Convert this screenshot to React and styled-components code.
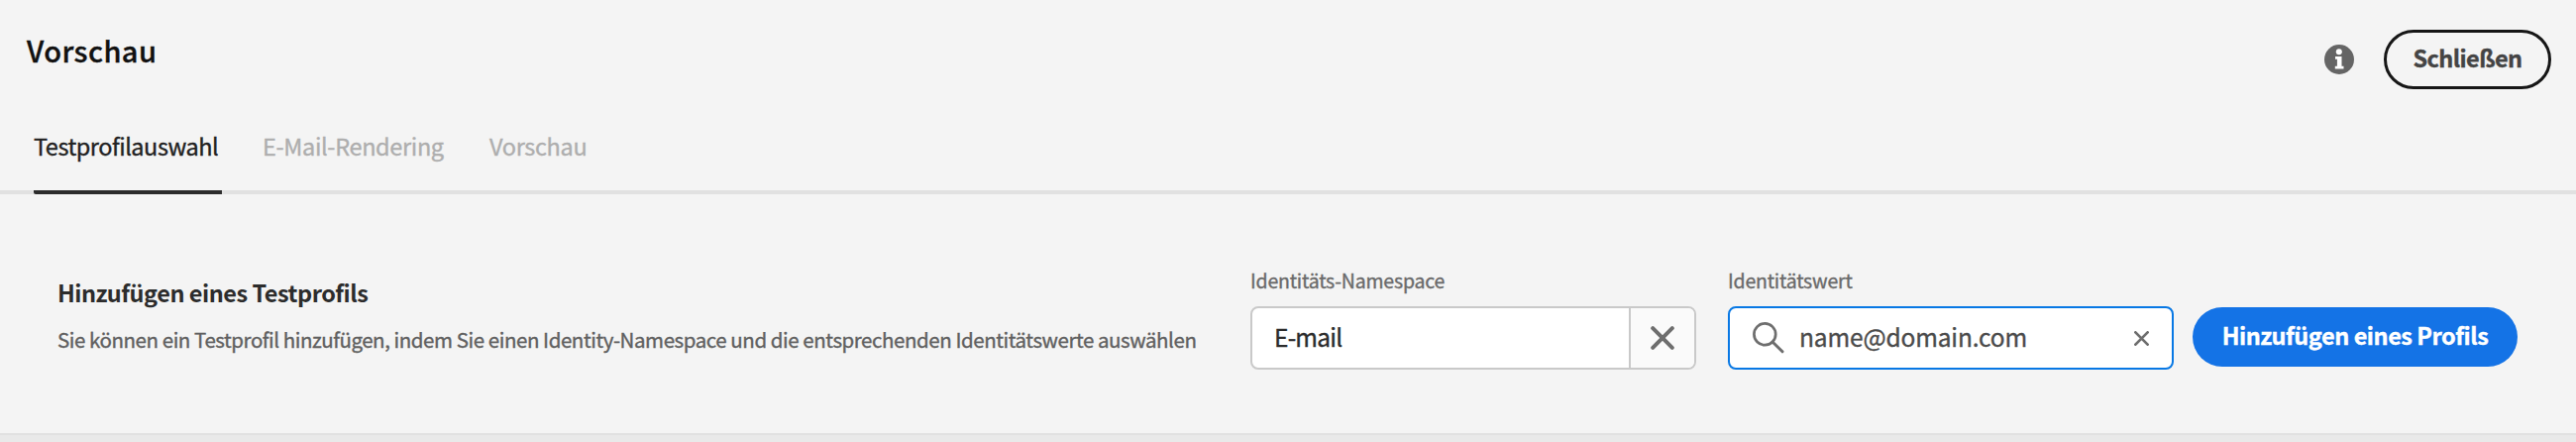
import React from 'react';
import styled, { createGlobalStyle } from 'styled-components';

const GlobalStyle = createGlobalStyle`
  * { box-sizing: border-box; }
  body {
    margin: 0;
    background: #f4f4f4;
    font-family: "Noto Sans CJK SC", "Noto Sans", sans-serif;
    line-height: 32px;
    color: #2c2c2c;
    -webkit-text-stroke: 0.35px currentColor;
  }
  button, input { font: inherit; color: inherit; }
`;

const Page = styled.main`
  height: 446px;
  display: flex;
  flex-direction: column;
  overflow: hidden;
`;

const Header = styled.header`
  height: 131px;
  padding: 30px 25px 0 27px;
  display: flex;
  align-items: flex-start;
  justify-content: space-between;
`;

const Title = styled.h1`
  margin: 4px 0 0;
  font-size: 29px;
  font-weight: 500;
  letter-spacing: 0.45px;
  color: #111;
  white-space: nowrap;
`;

const HeaderActions = styled.div`
  display: flex;
  align-items: center;
  gap: 30px;
`;

const Pill = styled.button`
  height: 60px;
  width: ${(p) => p.$width}px;
  padding: 0;
  border-radius: 30px;
  border: ${(p) => (p.$primary ? 'none' : '3px solid #161616')};
  background: ${(p) => (p.$primary ? '#1473e6' : 'transparent')};
  color: ${(p) => (p.$primary ? '#fff' : '#444')};
  font-size: 23.5px;
  font-weight: 700;
  letter-spacing: ${(p) => (p.$primary ? '-0.46px' : '-0.6px')};
  line-height: ${(p) => (p.$primary ? '57px' : '50px')};
  display: flex;
  justify-content: center;
  align-items: flex-start;
  white-space: nowrap;
`;

const Tabs = styled.nav`
  height: 65px;
  padding-left: 34px;
  display: flex;
  gap: 41px;
  box-shadow: inset 0 -4px #e1e1e1;
`;

const Tab = styled.a`
  width: ${(p) => p.$width}px;
  border-bottom: 4px solid ${(p) => (p.$active ? '#2c2c2c' : 'transparent')};
  border-bottom-left-radius: 2px;
  color: ${(p) => (p.$active ? '#222' : '#aeaeae')};
  font-size: 23.5px;
  letter-spacing: ${(p) => (p.$active ? -0.48 : -0.35)}px;
  white-space: nowrap;
`;

const Section = styled.section`
  height: 243px;
  padding: 70px 58px 0;
  display: flex;
  align-items: flex-start;
  border-bottom: 2px solid #e1e1e1;
`;

const Intro = styled.div`
  width: 1204px;
  padding-top: 13px;
`;

const Heading = styled.h2`
  margin: 0 0 15px;
  font-size: 23.5px;
  font-weight: 700;
  letter-spacing: -0.47px;
  color: #2c2c2c;
  -webkit-text-stroke: 0;
`;

const Description = styled.p`
  margin: 0;
  font-size: 20.5px;
  letter-spacing: -0.44px;
  color: #606060;
  white-space: nowrap;
`;

const Field = styled.label`
  width: 450px;
  margin-right: ${(p) => p.$gap}px;
  padding-top: 1px;
  display: flex;
  flex-direction: column;
  gap: 10px;
`;

const Label = styled.span`
  font-size: 19.5px;
  letter-spacing: -0.2px;
  color: #6a6a6a;
`;

const Control = styled.div`
  height: 64px;
  display: flex;
  align-items: center;
  overflow: hidden;
  background: #fff;
  border: 2px solid ${(p) => (p.$focused ? '#0878e4' : '#c9c9c9')};
  border-radius: 8px;
`;

const Input = styled.input`
  flex: 1;
  min-width: 0;
  height: 60px;
  padding: 0 0 3px ${(p) => p.$indent}px;
  border: 0;
  outline: 0;
  background: transparent;
  color: ${(p) => p.$color};
  font-size: 24.5px;
  letter-spacing: ${(p) => p.$track}px;
`;

const ClearSlot = styled.span`
  width: 66px;
  height: 60px;
  display: flex;
  align-items: center;
  justify-content: center;
  border-left: 2px solid #c9c9c9;
  background: #fafafa;
`;

const SearchClear = styled.span`
  margin-right: 23px;
`;

const PrimarySlot = styled.div`
  padding-top: 44px;
`;

const Footer = styled.div`
  flex: 1;
  background: #e9e9e9;
`;

const Icon = styled.svg`
  display: block;
  flex: none;
  fill: none;
  stroke: #6e6e6e;
`;

const FilledIcon = styled(Icon)`
  stroke: none;
`;

const FieldIcon = styled(Icon)`
  margin: -1px 0 0 23px;
`;

const InfoIcon = () => (
  <FilledIcon width="30" height="30" viewBox="0 0 30 30">
    <circle cx="15" cy="15" r="15" fill="#656565" />
    <circle cx="14.8" cy="7.2" r="3" fill="#fff" />
    <path d="M11 12h6.5v9.8h2v2.8H10.8v-2.8h2.1v-7H11z" fill="#fff" />
  </FilledIcon>
);

const SearchIcon = () => (
  <FieldIcon width="32" height="32" viewBox="0 0 32 32" strokeWidth="2.7">
    <circle cx="12.3" cy="12.3" r="10.9" />
    <path d="M20 20l10 9.8" strokeWidth="3" strokeLinecap="round" />
  </FieldIcon>
);

const CrossIcon = ({ size, weight }) => (
  <Icon width={size} height={size} viewBox="0 0 24 24" strokeWidth={weight} strokeLinecap="round">
    <path d="M2.2 2.2l19.6 19.6M21.8 2.2L2.2 21.8" />
  </Icon>
);

export default function App() {
  return (
    <Page>
      <GlobalStyle />
      <Header>
        <Title>Vorschau</Title>
        <HeaderActions>
          <InfoIcon />
          <Pill $width={169}>Schließen</Pill>
        </HeaderActions>
      </Header>
      <Tabs>
        <Tab $width={190} $active>Testprofilauswahl</Tab>
        <Tab $width={188}>E-Mail-Rendering</Tab>
        <Tab $width={100}>Vorschau</Tab>
      </Tabs>
      <Section>
        <Intro>
          <Heading>Hinzufügen eines Testprofils</Heading>
          <Description>
            Sie können ein Testprofil hinzufügen, indem Sie einen Identity-Namespace und die entsprechenden Identitätswerte auswählen
          </Description>
        </Intro>
        <Field $gap={32}>
          <Label>Identitäts-Namespace</Label>
          <Control>
            <Input $indent={22} $color="#2c2c2c" $track={-0.8} defaultValue="E-mail" />
            <ClearSlot>
              <CrossIcon size={24} weight={4} />
            </ClearSlot>
          </Control>
        </Field>
        <Field $gap={19}>
          <Label>Identitätswert</Label>
          <Control $focused>
            <SearchIcon />
            <Input $indent={15} $color="#4b4b4b" $track={-0.15} defaultValue="name@domain.com" />
            <SearchClear>
              <CrossIcon size={15} weight={4.4} />
            </SearchClear>
          </Control>
        </Field>
        <PrimarySlot>
          <Pill $primary $width={328}>Hinzufügen eines Profils</Pill>
        </PrimarySlot>
      </Section>
      <Footer />
    </Page>
  );
}
